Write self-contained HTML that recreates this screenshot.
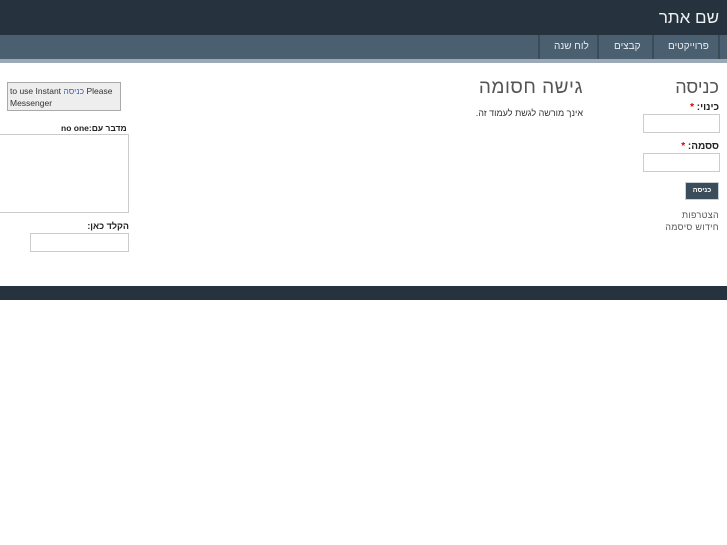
<!DOCTYPE html>
<html><head><meta charset="utf-8"><style>
body{margin:0;width:727px;height:545px;background:#fff;font-family:"Liberation Sans","Noto Sans CJK SC",sans-serif;position:relative;overflow:hidden}
.a{position:absolute}
#hd{left:0;top:0;width:727px;height:35px;background:#26323d}
#nav{left:0;top:35px;width:727px;height:24px;background:#4a5f6f}
#strip{left:0;top:59px;width:727px;height:4px;background:#9aa9b5}
.sep{top:35px;width:2px;height:24px;background:#3a4b59}
.nt{top:41px;font-size:10px;color:#e8edf0;direction:rtl}
#ft{left:0;top:286px;width:727px;height:14px;background:#26323d}
input,.box{position:absolute;border:1px solid #ccc;background:#fff;box-sizing:border-box}
.lb{font-size:10px;font-weight:bold;color:#222;direction:rtl}
</style></head><body>
<div class="a" id="hd"></div>
<div class="a" style="right:8px;top:8px;font-size:17px;color:#eef2f5">שם אתר</div>
<div class="a" id="nav"></div>
<div class="a" id="strip"></div>
<div class="a sep" style="left:538px"></div>
<div class="a sep" style="left:597px"></div>
<div class="a sep" style="left:652px"></div>
<div class="a sep" style="left:718px"></div>
<div class="a nt" style="left:554px">לוח שנה</div>
<div class="a nt" style="left:614px">קבצים</div>
<div class="a nt" style="left:668px">פרוייקטים</div>

<div class="a" style="right:8px;top:77px;font-size:18px;color:#555">כניסה</div>
<div class="a lb" style="right:8px;top:102px">כינוי: <span style="color:#d00">*</span></div>
<div class="box" style="left:643px;top:114px;width:77px;height:19px"></div>
<div class="a lb" style="right:8px;top:141px">ססמה: <span style="color:#d00">*</span></div>
<div class="box" style="left:643px;top:153px;width:77px;height:19px"></div>
<div class="a" style="left:685px;top:182px;width:32px;height:16px;background:#3b4c5a;border:1px solid #c9d2d9;color:#fff;font-size:7px;font-weight:bold;text-align:center;line-height:16px">כניסה</div>
<div class="a" style="right:8px;top:210px;font-size:9px;letter-spacing:.3px;color:#555">הצטרפות</div>
<div class="a" style="right:8px;top:222px;font-size:9px;letter-spacing:.3px;color:#555">חידוש סיסמה</div>

<div class="a" style="right:144px;top:77px;font-size:19px;letter-spacing:.5px;color:#555">גישה חסומה</div>
<div class="a" style="right:144px;top:108px;font-size:9px;color:#333;direction:rtl">אינך מורשה לגשת לעמוד זה.</div>

<div class="a" style="left:7px;top:82px;width:114px;height:29px;background:#eee;border:1px solid #aaa;box-sizing:border-box;font-size:8.5px;color:#333;padding:2px 2px;line-height:12px">to use Instant <span style="color:#46a">כניסה</span> Please<br>Messenger</div>
<div class="a" style="left:61px;top:123px;font-size:8.5px;font-weight:bold;color:#222">no one:מדבר עם</div>
<div class="box" style="left:-2px;top:134px;width:131px;height:79px"></div>
<div class="a lb" style="right:598px;top:221px;font-size:9px">הקלד כאן:</div>
<div class="box" style="left:30px;top:233px;width:99px;height:19px"></div>

<div class="a" id="ft"></div>
</body></html>
